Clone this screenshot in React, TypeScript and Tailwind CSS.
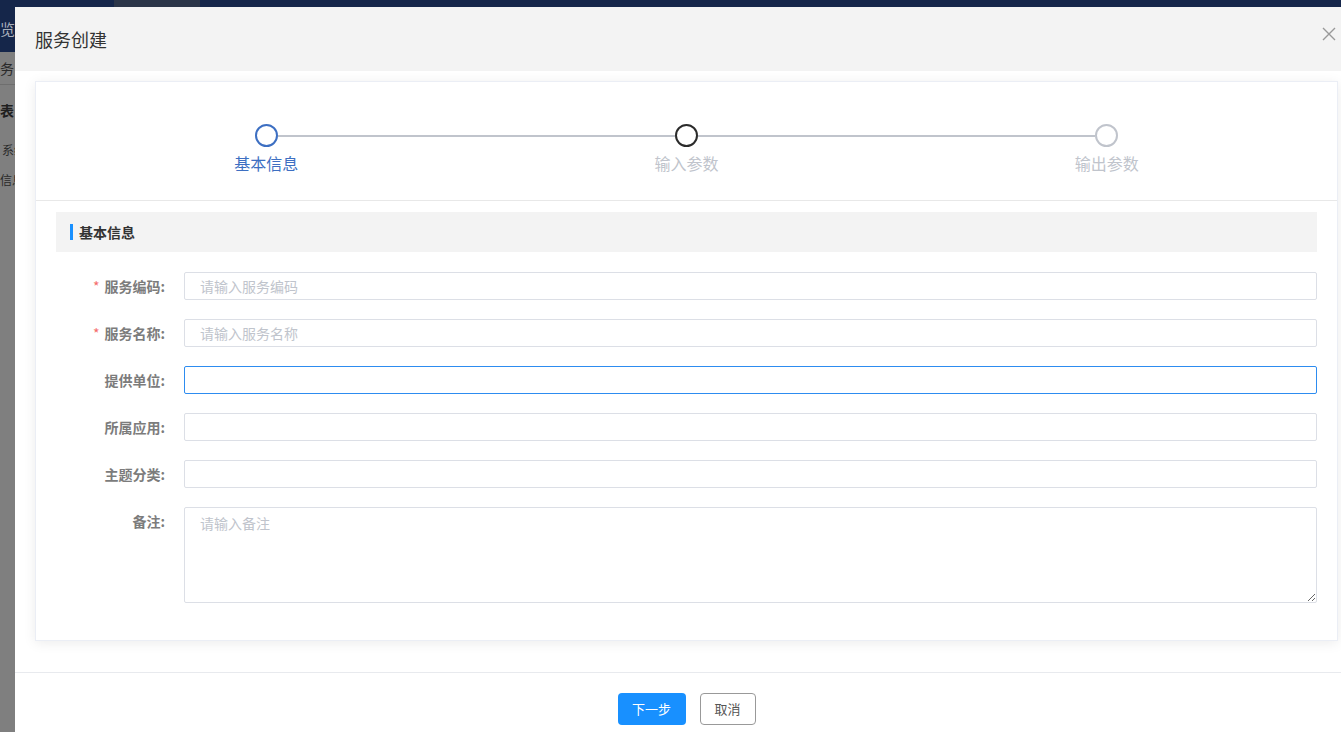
import React from 'react';

const font = { fontFamily: '"Noto Sans CJK SC", "Liberation Sans", sans-serif' };

type Field = { label: string; required?: boolean; placeholder?: string; focused?: boolean };

const fields: Field[] = [
  { label: '服务编码', required: true, placeholder: '请输入服务编码' },
  { label: '服务名称', required: true, placeholder: '请输入服务名称' },
  { label: '提供单位', focused: true },
  { label: '所属应用' },
  { label: '主题分类' },
];

const steps = [
  { title: '基本信息', circle: 'border-[#3d6fc2]', text: 'text-[#3d6fc2]' },
  { title: '输入参数', circle: 'border-[#2b2b2b]', text: 'text-[#c0c4cc]' },
  { title: '输出参数', circle: 'border-[#c0c4cc]', text: 'text-[#c0c4cc]' },
];

// page behind the dialog overlay, only a sliver shows on the left
const Backdrop: React.FC = () => (
  <div className="absolute inset-0 flex flex-col bg-[#7f7f7f]">
    <div className="h-[52px] bg-[#15264a] flex shrink-0">
      <div className="w-[114px] flex items-end pb-[12px]">
        <span className="text-[15px] text-[#a9afbb]">览</span>
      </div>
      <div className="w-[86px] h-[7px] bg-[#2b3548]" />
    </div>
    <div className="h-[33px] border-b border-[#6e6e6e] flex items-center">
      <span className="text-[14px] text-[#2a2a2a]">务</span>
    </div>
    <div className="h-[50px] flex items-center">
      <span className="text-[14px] font-bold text-[#1f1f1f]">表</span>
    </div>
    <div className="h-[30px] flex items-center">
      <span className="pl-[2px] text-[12px] text-[#2a2a2a]">系统</span>
    </div>
    <div className="h-[30px] flex items-center">
      <span className="text-[12px] text-[#2a2a2a]">信息</span>
    </div>
  </div>
);

const Stepper: React.FC = () => (
  <div className="h-[119px] border-b border-[#e8e8e8] px-[20px] grid grid-cols-3">
    {steps.map((s, i) => (
      <div key={s.title} className="flex flex-col items-center pt-[42px]">
        <div className="w-full flex items-center">
          <div className={`flex-1 h-[2px] ${i === 0 ? 'bg-transparent' : 'bg-[#c0c4cc]'}`} />
          <div className={`w-[23px] h-[23px] rounded-full border-2 bg-white ${s.circle}`} />
          <div className={`flex-1 h-[2px] ${i === steps.length - 1 ? 'bg-transparent' : 'bg-[#c0c4cc]'}`} />
        </div>
        <div className={`mt-[5px] text-[16px] leading-[22px] ${s.text}`}>{s.title}</div>
      </div>
    ))}
  </div>
);

const FormRow: React.FC<{ field: Field }> = ({ field }) => (
  <div className="flex items-center h-[28px]">
    <label className="w-[128px] pr-[19px] text-right text-[14px] font-bold text-[#7c7c7c]">
      {field.required && <span className="text-[#f56c6c] mr-[5px] font-normal">*</span>}
      {field.label}:
    </label>
    <input
      placeholder={field.placeholder}
      className={`flex-1 h-[28px] rounded-[2px] border px-[15px] text-[14px] text-[#606266] placeholder:text-[#c0c4cc] outline-none ${
        field.focused ? 'border-[#2d8cf0]' : 'border-[#dcdfe6]'
      }`}
      style={font}
    />
  </div>
);

export default function App() {
  return (
    <div className="relative w-[1341px] h-[732px] overflow-hidden" style={font}>
      <Backdrop />
      <div className="absolute left-[15px] top-[7px] w-[1343px] h-[760px] bg-white flex flex-col">
        <div className="h-[64px] bg-[#f3f3f3] flex items-center px-[20px] relative shrink-0">
          <h2 className="text-[18px] text-[#333] pt-[1px]">服务创建</h2>
          <button className="absolute left-[1307px] top-[20px] w-[14px] h-[14px] text-[#999]">
            <svg viewBox="0 0 14 14" className="w-[14px] h-[14px]" fill="none" stroke="currentColor" strokeWidth="1.4">
              <path d="M1 1 L13 13 M13 1 L1 13" />
            </svg>
          </button>
        </div>
        <div className="px-[20px] pt-[10px] pb-[31px] border-b border-[#e8eaee]">
          <div className="bg-white border border-[#ebeef5] shadow-[0_2px_12px_rgba(0,0,0,0.08)] h-[560px]">
            <Stepper />
            <div className="px-[20px] pt-[11px]">
              <div className="h-[40px] bg-[#f3f3f3] flex items-center pl-[14px]">
                <span className="w-[3px] h-[16px] bg-[#1890ff] mr-[6px]" />
                <span className="text-[14px] font-bold text-[#333]">基本信息</span>
              </div>
              <div className="mt-[20px] flex flex-col gap-[19px]">
                {fields.map(f => (
                  <FormRow key={f.label} field={f} />
                ))}
                <div className="flex items-start">
                  <label className="w-[128px] pr-[19px] pt-[4px] text-right text-[14px] font-bold text-[#7c7c7c]">
                    备注:
                  </label>
                  <textarea
                    placeholder="请输入备注"
                    className="flex-1 h-[96px] rounded-[2px] border border-[#dcdfe6] px-[15px] py-[5px] text-[14px] text-[#606266] placeholder:text-[#c0c4cc] outline-none"
                    style={font}
                  />
                </div>
              </div>
            </div>
          </div>
        </div>
        <div className="flex justify-center gap-[14px] pt-[20px]">
          <button className="w-[68px] h-[32px] rounded-[4px] bg-[#1890ff] text-white text-[13px]">下一步</button>
          <button className="w-[56px] h-[32px] rounded-[4px] border border-[#999] bg-white text-[#555] text-[13px]">取消</button>
        </div>
      </div>
    </div>
  );
}
